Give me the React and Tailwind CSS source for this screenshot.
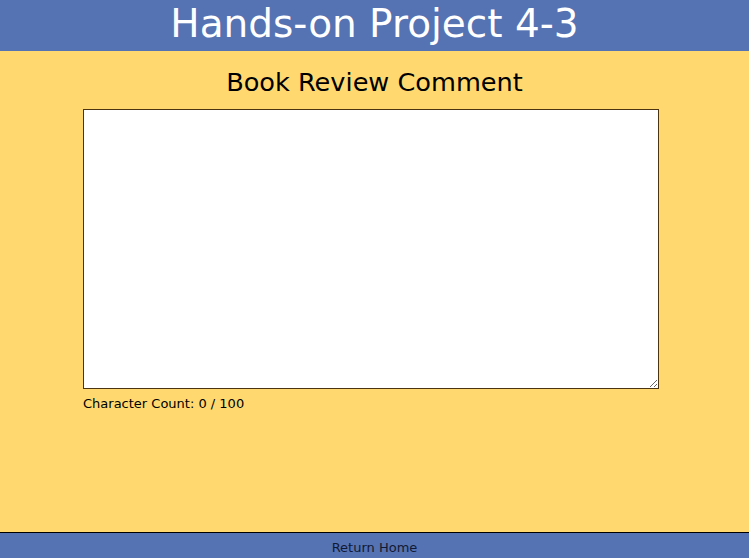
export default function App() {
  return (
    <div className="flex h-screen flex-col bg-[#ffd970] font-['DejaVu_Sans',Verdana,sans-serif]">
      <header className="h-[51px] bg-[#5572b3] text-center">
        <h1 className="text-[39px] leading-[48px] text-white">Hands-on Project 4-3</h1>
      </header>
      <main className="flex-1">
        <h2 className="mt-[15px] text-center text-[25.6px] leading-[32px] text-black">Book Review Comment</h2>
        <div className="ml-[83px] mt-[11px] w-[576px]">
          <textarea className="block h-[280px] w-full border border-[#4d3411] bg-white" />
          <p className="mt-[7px] text-[13px] leading-[16px] text-black">Character Count: 0 / 100</p>
        </div>
      </main>
      <footer className="h-[26px] border-t border-black bg-[#5572b3] pt-[4px] text-center text-[13px] leading-[22px] text-[#111a33]">
        Return Home
      </footer>
    </div>
  );
}
